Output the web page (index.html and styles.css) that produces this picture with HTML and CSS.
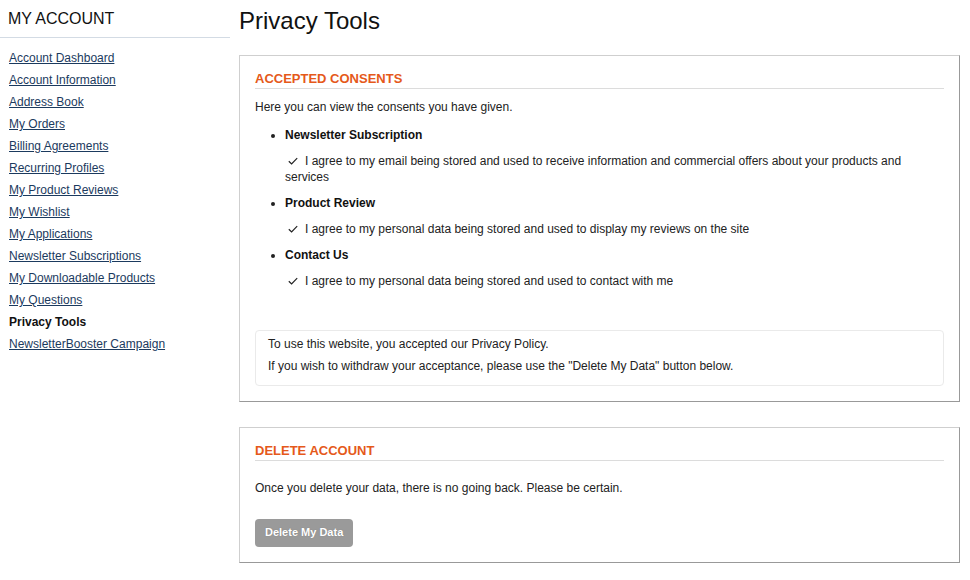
FILE: index.html
```html
<!DOCTYPE html>
<html>
<head>
<meta charset="utf-8">
<link rel="stylesheet" href="styles.css">
</head>
<body>
<div class="page">
  <aside class="sidebar">
    <div class="side-title">MY ACCOUNT</div>
    <ul class="nav">
      <li><a href="#">Account Dashboard</a></li>
      <li><a href="#">Account Information</a></li>
      <li><a href="#">Address Book</a></li>
      <li><a href="#">My Orders</a></li>
      <li><a href="#">Billing Agreements</a></li>
      <li><a href="#">Recurring Profiles</a></li>
      <li><a href="#">My Product Reviews</a></li>
      <li><a href="#">My Wishlist</a></li>
      <li><a href="#">My Applications</a></li>
      <li><a href="#">Newsletter Subscriptions</a></li>
      <li><a href="#">My Downloadable Products</a></li>
      <li><a href="#">My Questions</a></li>
      <li class="current">Privacy Tools</li>
      <li><a href="#">NewsletterBooster Campaign</a></li>
    </ul>
  </aside>
  <main class="main">
    <h1 class="page-title">Privacy Tools</h1>
    <section class="panel">
      <h2 class="panel-title">ACCEPTED CONSENTS</h2>
      <p class="intro">Here you can view the consents you have given.</p>
      <ul class="consents">
        <li>
          <strong>Newsletter Subscription</strong>
          <p class="consent"><svg class="check" width="10" height="8" viewBox="0 0 10 8"><path d="M0.8 4.2 L3.6 6.9 L9.2 1.1" fill="none" stroke="#222" stroke-width="1.2"/></svg>I agree to my email being stored and used to receive information and commercial offers about your products and services</p>
        </li>
        <li>
          <strong>Product Review</strong>
          <p class="consent"><svg class="check" width="10" height="8" viewBox="0 0 10 8"><path d="M0.8 4.2 L3.6 6.9 L9.2 1.1" fill="none" stroke="#222" stroke-width="1.2"/></svg>I agree to my personal data being stored and used to display my reviews on the site</p>
        </li>
        <li>
          <strong>Contact Us</strong>
          <p class="consent"><svg class="check" width="10" height="8" viewBox="0 0 10 8"><path d="M0.8 4.2 L3.6 6.9 L9.2 1.1" fill="none" stroke="#222" stroke-width="1.2"/></svg>I agree to my personal data being stored and used to contact with me</p>
        </li>
      </ul>
      <div class="policy">
        <p>To use this website, you accepted our Privacy Policy.</p>
        <p>If you wish to withdraw your acceptance, please use the "Delete My Data" button below.</p>
      </div>
    </section>
    <section class="panel">
      <h2 class="panel-title">DELETE ACCOUNT</h2>
      <p class="warn">Once you delete your data, there is no going back. Please be certain.</p>
      <button class="btn" type="button">Delete My Data</button>
    </section>
  </main>
</div>
</body>
</html>
```

FILE: styles.css
```css
html, body {
  margin: 0;
  padding: 0;
  background: #fff;
}
body {
  font-family: "Liberation Sans", Arial, sans-serif;
  font-size: 12px;
  color: #222;
}
.page {
  display: flex;
  gap: 9px;
  align-items: flex-start;
}
.sidebar {
  width: 230px;
  flex: none;
}
.side-title {
  font-size: 16px;
  line-height: 20px;
  padding: 9px 8px 8px;
  color: #111;
  border-bottom: 1px solid #d3dbe4;
}
.nav {
  list-style: none;
  margin: 0;
  padding: 9px 0 0 9px;
}
.nav li {
  line-height: 22px;
}
.nav a {
  color: #1b3a5e;
  text-decoration: underline;
}
.nav .current {
  font-weight: bold;
  color: #111;
}
.main {
  width: 721px;
  flex: none;
}
.page-title {
  font-size: 24px;
  font-weight: normal;
  line-height: 28px;
  margin: 7px 0 20px;
  color: #111;
}
.panel {
  border: 1px solid;
  border-color: #cfcfcf #999 #999 #cfcfcf;
  padding: 15px 15px 15px;
  margin-bottom: 25px;
}
.panel-title {
  margin: 0;
  font-size: 13px;
  line-height: 16px;
  font-weight: bold;
  color: #e5591a;
  padding-bottom: 1px;
  border-bottom: 1px solid #dcdcdc;
}
.intro {
  margin: 9px 0 0;
  line-height: 18px;
}
.consents {
  margin: 10px 0 0;
  padding: 0 0 0 30px;
}
.consents li {
  line-height: 18px;
  margin-bottom: 9px;
}
.consents strong {
  color: #111;
}
.consent {
  margin: 9px 0 0;
  line-height: 16px;
}
.check {
  margin: 0 7px 0 3px;
  vertical-align: 0;
}
.policy {
  margin-top: 41px;
  border: 1px solid #eaeaea;
  border-radius: 4px;
  padding: 4px 12px 6px;
}
.policy p {
  margin: 0 0 4px;
  line-height: 18px;
}
.warn {
  margin: 18px 0 22px;
  line-height: 18px;
}
.btn {
  display: block;
  height: 28px;
  padding: 0 10px 3px;
  border: 0;
  border-radius: 4px;
  background: #9a9a9a;
  color: #fff;
  font-family: "Liberation Sans", Arial, sans-serif;
  font-size: 11px;
  font-weight: bold;
  text-shadow: 0 0 1px #777;
}
```
